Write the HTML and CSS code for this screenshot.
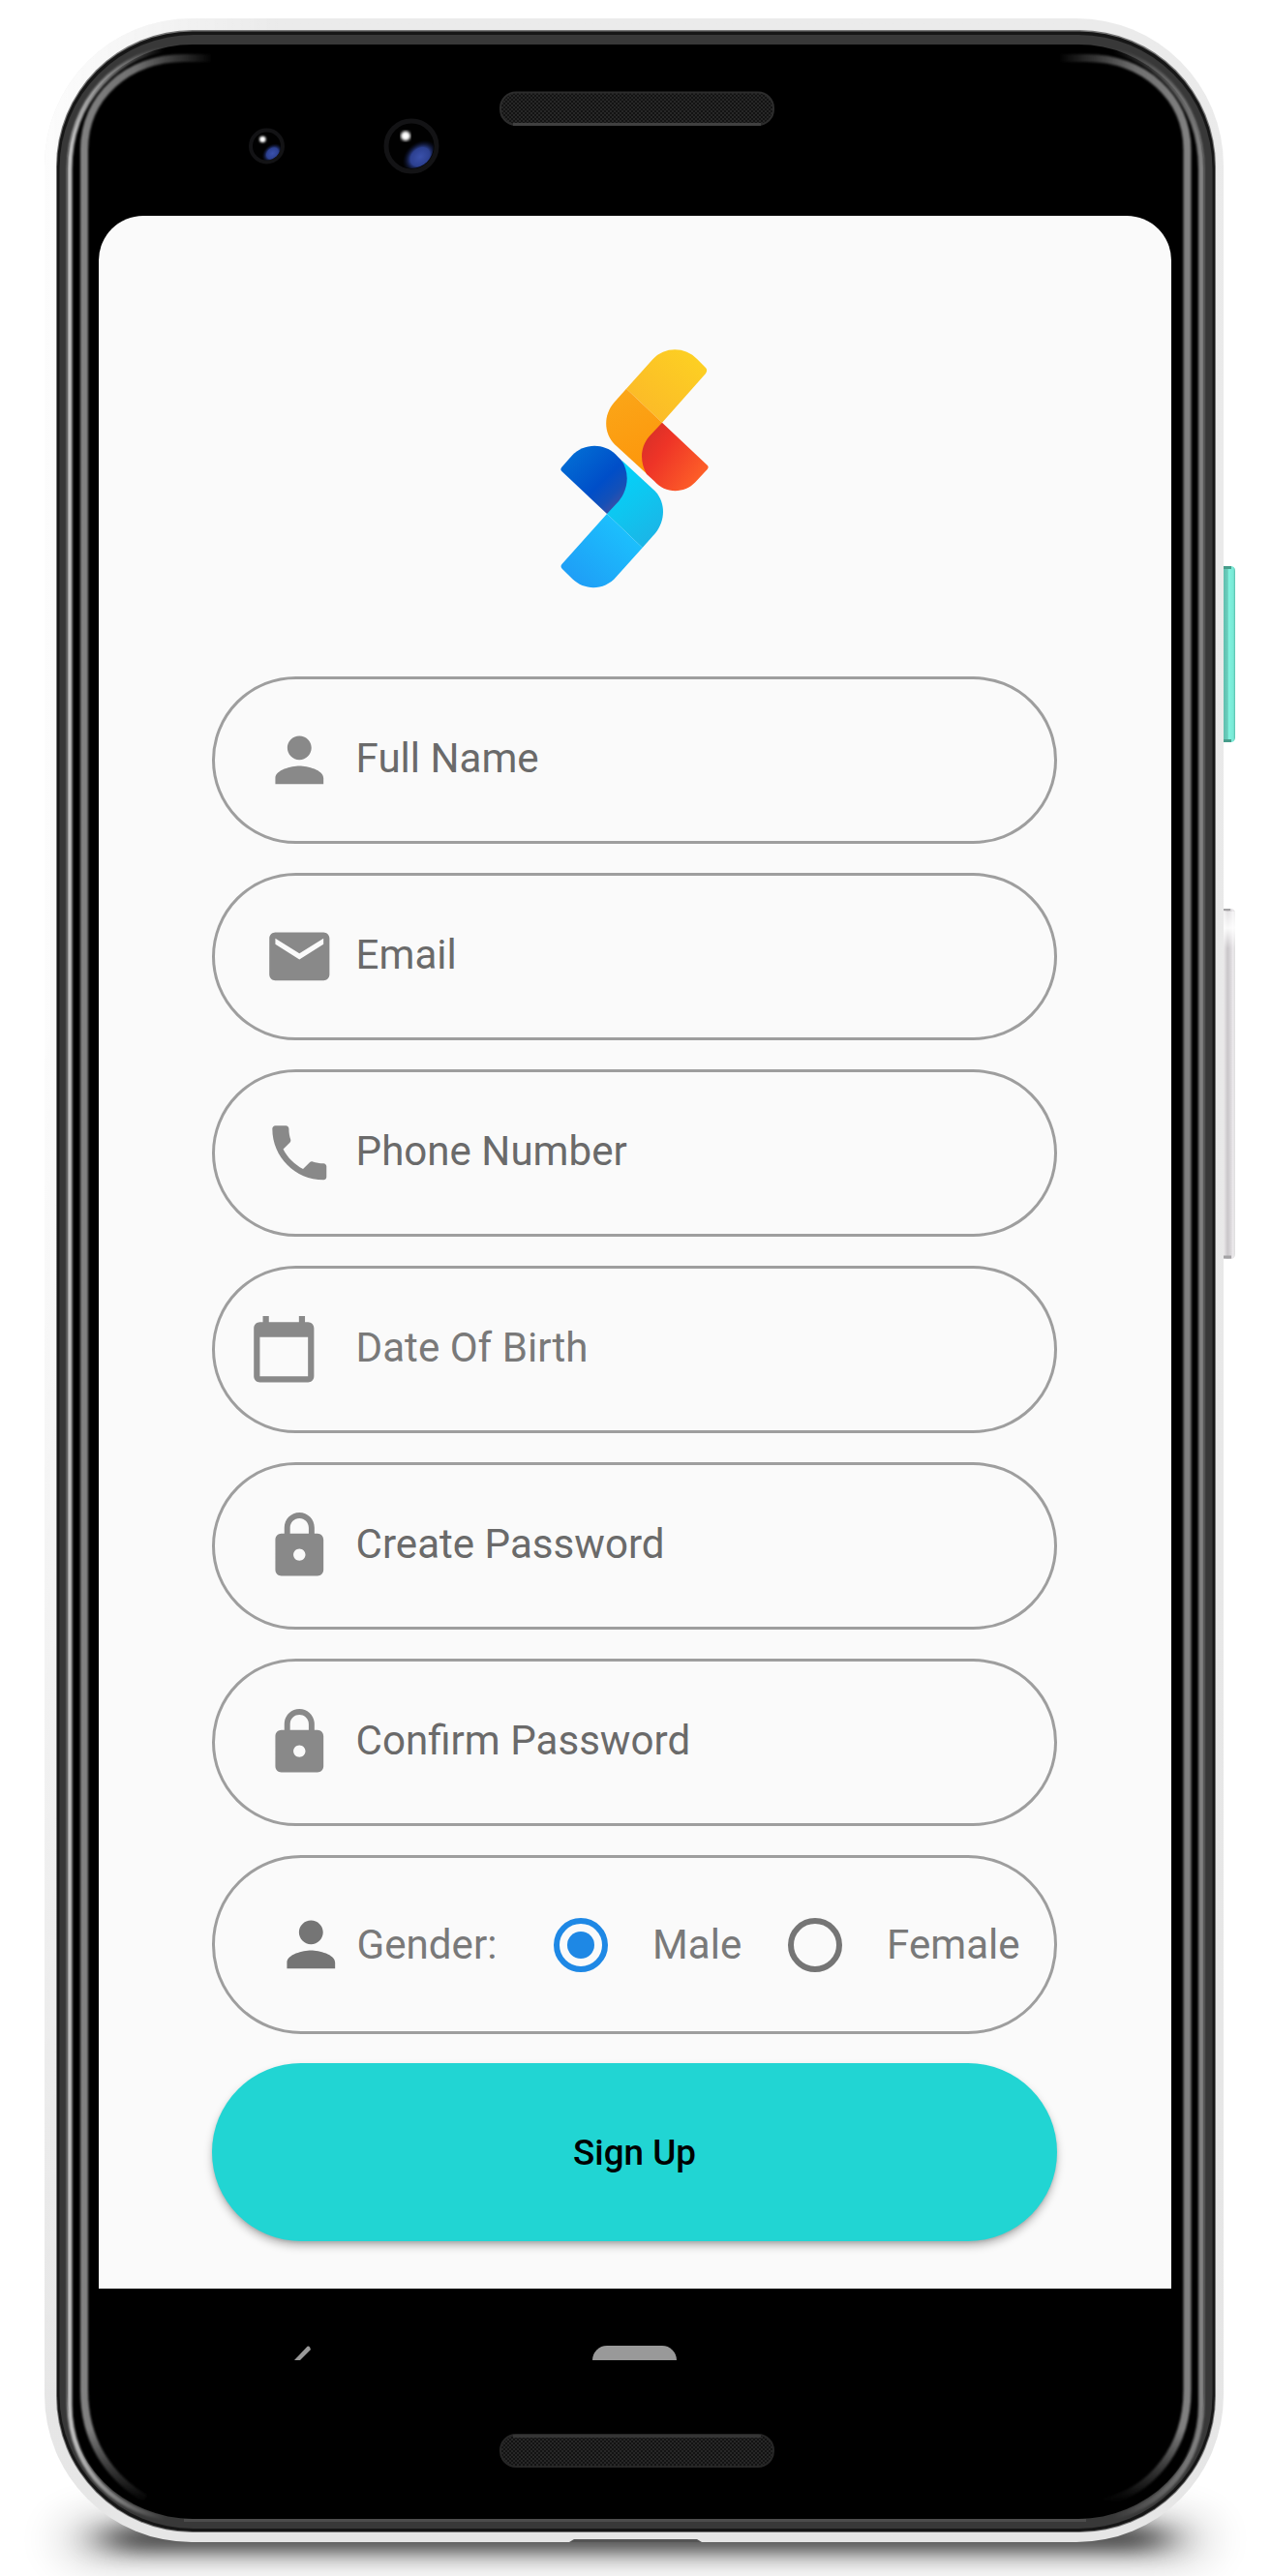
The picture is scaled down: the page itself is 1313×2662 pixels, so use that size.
FILE: index.html
```html
<!DOCTYPE html>
<html lang="en">
<head>
<meta charset="utf-8">
<title>Sign Up</title>
<link rel="stylesheet" href="styles.css">
</head>
<body>
<div class="device">
  <svg class="shell" width="1313" height="2662" viewBox="0 0 1313 2662" aria-hidden="true">
    <defs>
      <filter id="wide" x="-20%" y="-150%" width="140%" height="400%"><feGaussianBlur stdDeviation="26 20"/></filter>
      <filter id="tight" x="-20%" y="-150%" width="140%" height="400%"><feGaussianBlur stdDeviation="22 10"/></filter>
      <filter id="soft" filterUnits="userSpaceOnUse" x="0" y="0" width="1313" height="2662"><feGaussianBlur stdDeviation="1"/></filter>
      <filter id="glow"><feGaussianBlur stdDeviation="1.800"/></filter>
      <linearGradient id="body" x1="0" y1="0" x2="0" y2="1"><stop offset="0" stop-color="#ebebeb"/><stop offset="1" stop-color="#e6e6e6"/></linearGradient>
      <linearGradient id="bodySide" x1="0" y1="0" x2="1" y2="0"><stop offset="0" stop-color="#fff" stop-opacity=".85"/><stop offset=".2" stop-color="#fff" stop-opacity="0"/></linearGradient>
      <linearGradient id="bodyFade" x1="0" y1="0" x2="0" y2="1"><stop offset="0" stop-color="#fff"/><stop offset=".4" stop-color="#fff"/><stop offset=".95" stop-color="#000"/></linearGradient>
      <mask id="sideMask"><rect width="1313" height="2662" fill="url(#bodyFade)"/></mask>
      <linearGradient id="tail" gradientUnits="userSpaceOnUse" x1="0" y1="2510" x2="0" y2="2586"><stop offset="0" stop-color="#fff"/><stop offset="1" stop-color="#000"/></linearGradient>
      <mask id="tailMask" maskUnits="userSpaceOnUse" x="0" y="0" width="1313" height="2662"><rect width="1313" height="2662" fill="url(#tail)"/></mask>
      <linearGradient id="lineL" gradientUnits="userSpaceOnUse" x1="75" y1="0" x2="220" y2="0"><stop offset="0" stop-color="#848484"/><stop offset=".45" stop-color="#707070"/><stop offset="1" stop-color="#707070" stop-opacity="0"/></linearGradient>
      <linearGradient id="lineR" gradientUnits="userSpaceOnUse" x1="1238" y1="0" x2="1094" y2="0"><stop offset="0" stop-color="#848484"/><stop offset=".45" stop-color="#707070"/><stop offset="1" stop-color="#707070" stop-opacity="0"/></linearGradient>
      <linearGradient id="rimL" gradientUnits="userSpaceOnUse" x1="69" y1="0" x2="170" y2="0"><stop offset="0" stop-color="#c8c8c8"/><stop offset="1" stop-color="#c8c8c8" stop-opacity="0"/></linearGradient>
      <linearGradient id="rimR" gradientUnits="userSpaceOnUse" x1="1244" y1="0" x2="1150" y2="0"><stop offset="0" stop-color="#858585"/><stop offset="1" stop-color="#858585" stop-opacity="0"/></linearGradient>
      <pattern id="mesh" width="4" height="4" patternUnits="userSpaceOnUse"><rect width="4" height="4" fill="#131313"/><path d="M0 0h2v2h-2zM2 2h2v2h-2z" fill="#272727"/></pattern>
      <linearGradient id="teal"><stop offset="0" stop-color="#5fbfae"/><stop offset=".35" stop-color="#6acdbc"/><stop offset=".45" stop-color="#80f2de"/><stop offset=".85" stop-color="#78e8d5"/><stop offset="1" stop-color="#59bba8"/></linearGradient>
      <linearGradient id="pale"><stop offset="0" stop-color="#ebe9ea"/><stop offset=".35" stop-color="#c9c6c9"/><stop offset=".65" stop-color="#dcd9dc"/><stop offset=".8" stop-color="#ece9ec"/><stop offset="1" stop-color="#dedede"/></linearGradient>
      <linearGradient id="shine" x1="0" y1="0" x2="0" y2="1"><stop offset="0" stop-color="#fff" stop-opacity=".5"/><stop offset=".45" stop-color="#fff" stop-opacity=".9"/><stop offset="1" stop-color="#fff" stop-opacity="0"/></linearGradient>
      <radialGradient id="lens"><stop offset="0" stop-color="#3a51ab"/><stop offset=".55" stop-color="#2c4090"/><stop offset="1" stop-color="#0b1230" stop-opacity="0"/></radialGradient>
      <clipPath id="lensSmall"><circle cx="275.500" cy="151" r="14.500"/></clipPath>
      <clipPath id="lensLarge"><circle cx="425" cy="151" r="23"/></clipPath>
    </defs>
    <rect x="70" y="2602" width="1173" height="44" rx="22" fill="#000" opacity=".24" filter="url(#wide)"/>
    <rect x="110" y="2610" width="1093" height="26" rx="13" fill="#000" opacity=".68" filter="url(#tight)"/>
    <path d="M1264 585h7q5 0 5 5v172q0 5-5 5h-7z" fill="url(#teal)"/>
    <path d="M1264 586.500h8M1264 765.500h8" stroke="#479d8b" stroke-width="3"/>
    <path d="M1264 939h7q5 0 5 5v352q0 5-5 5h-7z" fill="url(#pale)"/>
    <path d="M1264 942h12v38h-12z" fill="url(#shine)"/>
    <path d="M1264 940h7" stroke="#a3a2a4" stroke-width="2"/>
    <path d="M1264 1299h8" stroke="#a3a2a4" stroke-width="3"/>
    <rect x="46" y="19" width="1218" height="2608" rx="152" fill="url(#body)"/>
    <rect x="46" y="19" width="1218" height="2608" rx="152" fill="url(#bodySide)" mask="url(#sideMask)"/>
    <path d="M588 2627l5-3h127l5 3z" fill="#555"/>
    <rect x="58" y="31" width="1198" height="2586" rx="141" fill="#777"/>
    <rect x="59" y="32.500" width="1196" height="2583.500" rx="140" fill="#161616"/>
    <rect x="61.500" y="36" width="1191" height="2577" rx="138" fill="#383838"/>
    <rect x="69" y="46" width="1175" height="2557" rx="130" fill="#000"/>
    <path d="M190 2604.500H1122" stroke="#4c4c4c" stroke-width="3"/>
    <g fill="none" filter="url(#soft)">
      <path d="M190 48.500C120 52 72 105 72 175V2485C72 2550 120 2603 190 2603" stroke="url(#rimL)" stroke-width="5"/>
      <path d="M1123 48.500C1193 52 1241 105 1241 175V2485C1241 2550 1193 2603 1123 2603" stroke="url(#rimR)" stroke-width="6"/>
      <g mask="url(#tailMask)">
        <path d="M218 60H190C132 60 87 100 87 155V2470C87 2520 110 2558 150 2582" stroke="url(#lineL)" stroke-width="8"/>
        <path d="M1095 60H1123C1181 60 1226.500 100 1226.500 155V2470C1226.500 2530 1190 2574 1140 2586" stroke="url(#lineR)" stroke-width="8"/>
      </g>
    </g>
    <rect x="517" y="95.500" width="282" height="33.500" rx="16" fill="url(#mesh)" stroke="#2c2c2c" stroke-width="2"/>
    <path d="M530 128.500H786" stroke="#404040" stroke-width="3"/>
    <rect x="517" y="2516" width="282" height="33" rx="16" fill="url(#mesh)" stroke="#262626" stroke-width="2"/>
    <path d="M530 2517.500H786" stroke="#353535" stroke-width="3"/>
    <circle cx="275.500" cy="151" r="16.500" fill="#010101" stroke="#131315" stroke-width="4"/>
    <g clip-path="url(#lensSmall)"><ellipse cx="281.500" cy="158.500" rx="12" ry="9" fill="url(#lens)" transform="rotate(-40 281.500 158.500)"/></g>
    <circle cx="271.300" cy="144" r="3.300" fill="#fff" filter="url(#soft)"/>
    <circle cx="425" cy="151" r="26" fill="#010101" stroke="#131315" stroke-width="5"/>
    <g clip-path="url(#lensLarge)"><ellipse cx="434" cy="162" rx="20" ry="15" fill="url(#lens)" transform="rotate(-40 434 162)"/></g>
    <circle cx="419" cy="140.500" r="5" fill="#fff" filter="url(#glow)"/>
  </svg>

  <main class="screen">
    <svg class="logo" width="240" height="300" viewBox="0 0 720 900" role="img" aria-label="Logo">
      <defs>
        <linearGradient id="y" x1="1" y1="0" x2="0" y2="1"><stop offset="0" stop-color="#fdd322"/><stop offset="1" stop-color="#fbb529"/></linearGradient>
        <linearGradient id="o" x1=".3" y1="0" x2=".6" y2="1"><stop offset="0" stop-color="#fba618"/><stop offset="1" stop-color="#fd960b"/></linearGradient>
        <linearGradient id="r" x1="0" y1=".1" x2="1" y2=".8"><stop offset=".1" stop-color="#dc3028"/><stop offset=".35" stop-color="#ee3427"/><stop offset="1" stop-color="#ff6428"/></linearGradient>
        <linearGradient id="b" x1="0" y1=".1" x2=".85" y2="1"><stop offset="0" stop-color="#0271d6"/><stop offset=".6" stop-color="#004ec8"/><stop offset=".8" stop-color="#1450b8"/><stop offset="1" stop-color="#4a50a0"/></linearGradient>
        <linearGradient id="c" x1=".2" y1="0" x2=".7" y2="1"><stop offset="0" stop-color="#00d5fc"/><stop offset=".5" stop-color="#0ec6f0"/><stop offset="1" stop-color="#1cb4e6"/></linearGradient>
        <linearGradient id="l" x1="1" y1="0" x2="0" y2="1"><stop offset="0" stop-color="#1bcaff"/><stop offset="1" stop-color="#1f98f5"/></linearGradient>
      </defs>
      <path fill="url(#y)" d="M321 215L403 124C440 84 503 84 541 124L567 150Q574 158 567 168L432 320Z"/>
      <path fill="url(#o)" d="M321 215L432 320L400 480L383 478L285 388C250 352 250 296 283 258Z"/>
      <path fill="url(#r)" d="M432 320L572 452Q578 458 572 465L535 505C500 542 440 540 408 502L384 480C362 440 364 396 392 363Z"/>
      <path fill="url(#c)" d="M308 438L411 533C443 568 443 624 411 663L371 708L261 603Z"/>
      <path fill="url(#b)" d="M261 603L121 471Q115 465 121 458L152 423C188 384 250 382 287 418L306 437C330 470 330 524 298 563Z"/>
      <path fill="url(#l)" d="M261 603L371 708L290 798C254 841 192 842 154 805L122 773Q115 766 122 758Z"/>
    </svg>

    <form class="form">
      <label class="field">
        <svg class="icon" viewBox="0 0 24 24"><path d="M12 12c2.210 0 4-1.790 4-4s-1.790-4-4-4-4 1.790-4 4 1.790 4 4 4zm0 2c-2.670 0-8 1.340-8 4v2h16v-2c0-2.660-5.330-4-8-4z"/></svg>
        <span class="hint">Full Name</span>
      </label>
      <label class="field">
        <svg class="icon" viewBox="0 0 24 24"><path d="M20 4H4c-1.100 0-1.990.9-1.990 2L2 18c0 1.100.9 2 2 2h16c1.100 0 2-.9 2-2V6c0-1.100-.9-2-2-2zm0 4l-8 5-8-5V6l8 5 8-5v2z"/></svg>
        <span class="hint">Email</span>
      </label>
      <label class="field">
        <svg class="icon" viewBox="0 0 24 24"><path d="M6.620 10.790c1.440 2.830 3.760 5.140 6.590 6.590l2.200-2.200c.27-.27.67-.36 1.020-.24 1.120.37 2.330.57 3.570.57.55 0 1 .45 1 1V20c0 .55-.45 1-1 1-9.390 0-17-7.610-17-17 0-.55.45-1 1-1h3.500c.55 0 1 .45 1 1 0 1.250.2 2.450.57 3.570.11.35.03.74-.25 1.020l-2.200 2.200z"/></svg>
        <span class="hint">Phone Number</span>
      </label>
      <label class="field field-date">
        <svg class="icon" viewBox="0 0 24 24"><path d="M20 3h-1V1h-2v2H7V1H5v2H4c-1.100 0-2 .9-2 2v16c0 1.100.9 2 2 2h16c1.100 0 2-.9 2-2V5c0-1.100-.9-2-2-2zm0 18H4V8h16v13z"/></svg>
        <span class="hint">Date Of Birth</span>
      </label>
      <label class="field">
        <svg class="icon" viewBox="0 0 24 24"><path d="M18 8h-1V6c0-2.760-2.240-5-5-5S7 3.240 7 6v2H6c-1.100 0-2 .9-2 2v10c0 1.100.9 2 2 2h12c1.100 0 2-.9 2-2V10c0-1.100-.9-2-2-2zm-6 9c-1.100 0-2-.9-2-2s.9-2 2-2 2 .9 2 2-.9 2-2 2zm3.100-9H8.900V6c0-1.710 1.390-3.100 3.100-3.100 1.710 0 3.100 1.390 3.100 3.100v2z"/></svg>
        <span class="hint">Create Password</span>
      </label>
      <label class="field">
        <svg class="icon" viewBox="0 0 24 24"><path d="M18 8h-1V6c0-2.760-2.240-5-5-5S7 3.240 7 6v2H6c-1.100 0-2 .9-2 2v10c0 1.100.9 2 2 2h12c1.100 0 2-.9 2-2V10c0-1.100-.9-2-2-2zm-6 9c-1.100 0-2-.9-2-2s.9-2 2-2 2 .9 2 2-.9 2-2 2zm3.100-9H8.900V6c0-1.710 1.390-3.100 3.100-3.100 1.710 0 3.100 1.390 3.100 3.100v2z"/></svg>
        <span class="hint">Confirm Password</span>
      </label>
      <div class="field gender">
        <svg class="icon" viewBox="0 0 24 24"><path d="M12 12c2.210 0 4-1.790 4-4s-1.790-4-4-4-4 1.790-4 4 1.790 4 4 4zm0 2c-2.670 0-8 1.340-8 4v2h16v-2c0-2.660-5.330-4-8-4z"/></svg>
        <span class="gender-label">Gender:</span>
        <span class="option"><span class="radio radio-on"></span>Male</span>
        <span class="option"><span class="radio"></span>Female</span>
      </div>
      <button class="submit" type="button">Sign Up</button>
    </form>
  </main>

  <nav class="navbar">
    <svg class="back" width="18" height="15" viewBox="0 0 18 15"><path d="M0 15L13.500.8Q15 0 16 1.500L17 4L6 15Z" fill="#999"/></svg>
    <span class="home"></span>
  </nav>
</div>
</body>
</html>
```
FILE: styles.css
```css
* { box-sizing: border-box; }

body {
  margin: 0;
  background: #fff;
  font-family: Roboto, sans-serif;
}

.device {
  position: relative;
  width: 1313px;
  height: 2662px;
  padding: 223px 103px 0 102px;
  overflow: hidden;
}

.shell {
  position: absolute;
  top: 0;
  left: 0;
}

.screen {
  position: relative;
  display: flex;
  flex-direction: column;
  align-items: center;
  width: 1108px;
  height: 2142px;
  padding-top: 107px;
  border-radius: 46px 46px 0 0;
  background: #fafafa;
}

.logo { display: block; margin-right: -8px; }

.form {
  display: flex;
  flex-direction: column;
  gap: 30px;
  width: 873px;
  margin: 69px 1px 0 0;
}

.field {
  display: flex;
  align-items: center;
  height: 173px;
  padding-left: 49.500px;
  border: 3px solid #9e9e9e;
  border-radius: 87px;
  color: #6a6a6a;
  font-size: 42.100px;
  white-space: nowrap;
}

.icon {
  flex: none;
  width: 74.600px;
  height: 74.600px;
  fill: #898989;
}

.hint {
  margin-left: 21.500px;
  padding-bottom: 4px;
}

.field-date { padding-left: 33.500px; color: #797979; }
.field-date .hint { margin-left: 37.500px; }

.gender {
  height: 185px;
  padding-left: 62px;
  border-radius: 92px;
  color: #797979;
}

.gender .icon { fill: #757575; }
.gender-label { width: 203px; margin-left: 10px; }

.option {
  display: flex;
  align-items: center;
  gap: 46.500px;
  width: 242px;
}

.radio {
  flex: none;
  display: grid;
  place-items: center;
  width: 56px;
  height: 56px;
  border: 6px solid #757575;
  border-radius: 50%;
}

.radio-on { border-color: #1e88e5; }
.radio-on::before {
  content: "";
  width: 28px;
  height: 28px;
  border-radius: 50%;
  background: #1e88e5;
}

.submit {
  height: 184px;
  padding: 0;
  border: 0;
  border-radius: 92px;
  background: #21d5d3;
  box-shadow: 0 5px 8px rgba(0, 0, 0, .26), 0 2px 3px rgba(0, 0, 0, .1);
  color: #000;
  font: 500 36.800px Roboto, sans-serif;
}

.navbar {
  position: relative;
  display: flex;
  align-items: flex-end;
  height: 74px;
  padding-left: 202px;
}

.back { display: block; }

.home {
  width: 87px;
  height: 15px;
  margin-left: 290px;
  border-radius: 15px 15px 0 0;
  background: #999;
}
```
